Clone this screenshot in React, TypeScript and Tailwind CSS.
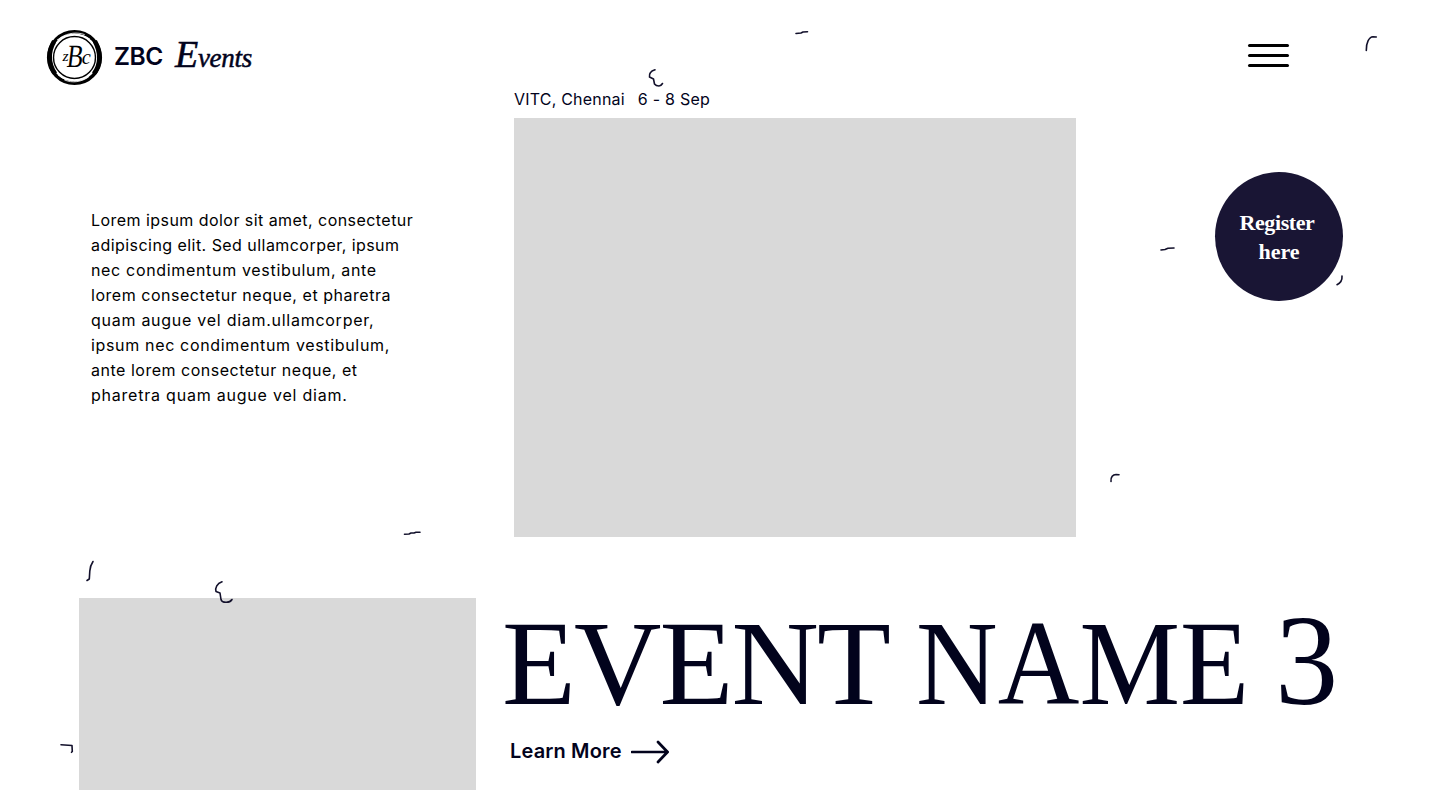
const introLines = [
  { text: 'Lorem ipsum dolor sit amet, consectetur', tracking: 'tracking-[0.45px]' },
  { text: 'adipiscing elit. Sed ullamcorper, ipsum', tracking: 'tracking-[0.45px]' },
  { text: 'nec condimentum vestibulum, ante', tracking: 'tracking-[0.67px]' },
  { text: 'lorem consectetur neque, et pharetra', tracking: 'tracking-[0.53px]' },
  { text: 'quam augue vel diam.ullamcorper,', tracking: 'tracking-[0.73px]' },
  { text: 'ipsum nec condimentum vestibulum,', tracking: 'tracking-[0.66px]' },
  { text: 'ante lorem consectetur neque, et', tracking: 'tracking-[0.51px]' },
  { text: 'pharetra quam augue vel diam.', tracking: 'tracking-[0.78px]' },
];

function Logo() {
  return (
    <svg className="size-[57px] shrink-0" viewBox="0 0 56 56" fill="none" stroke="#000">
      <circle cx="28" cy="28" r="25.4" strokeWidth="3.400" />
      <circle cx="28" cy="28" r="20.6" strokeWidth="1.4" />
      <path d="M8 12C2 22 2 34 9 44M48 12C54 23 54 35 47 44" strokeWidth="4.500" />
      <path d="M14 8.500C22 3.500 31 3 38 5.500M18 50C26 53.500 35 52 42 47" stroke="#fff" strokeWidth="0.8" />
      <path d="M11 11C19 4.500 34 3.500 43 10M12 45C20 52 34 52.500 44 44" stroke="#fff" strokeWidth="1" />
      <g fill="#000" stroke="none" fontFamily="'Liberation Serif', serif">
        <text x="16.300" y="31.500" fontSize="15" fontStyle="italic" textLength="6" lengthAdjust="spacingAndGlyphs">z</text>
        <text x="20" y="37" fontSize="32" textLength="16" lengthAdjust="spacingAndGlyphs" transform="translate(4.200 0) skewX(-7)">B</text>
        <text x="35" y="34" fontSize="20" fontStyle="italic">c</text>
      </g>
    </svg>
  );
}

function Confetti() {
  return (
    <svg
      className="pointer-events-none absolute inset-0 h-full w-full"
      viewBox="0 0 1440 790"
      fill="none"
      stroke="#12102b"
      strokeWidth="1.6"
      strokeLinecap="round"
      strokeLinejoin="round"
      aria-hidden="true"
    >
      <path d="M796 33.500L801 33L803 32L807.500 31.800" />
      <path d="M404.500 534.300L409 534L411 533L414 533L416 532.200L420 532.200" />
      <path d="M1161 250L1165 249.500L1168 248.300L1174 248" />
      <path d="M655 69.700C651 71 649 74 649.500 77L653.500 79L654.500 84Q656 86 659 86Q661 86 662.500 83.500" />
      <path d="M222 581.700C217 583.500 215 588 216 591.500L220 593L221 599.500C222 603 229.500 603.500 232 599.500" />
      <path d="M1366.300 50.500C1366 43 1369 37 1373 36.800L1376.300 37" />
      <path d="M1342 276Q1342.500 282 1337 284.700" />
      <path d="M1111 481.500C1110.500 477 1113 474.500 1116 474.500L1119 474.700" />
      <path d="M93 561.500C91 564.500 90 567 89.800 571L89.300 579L87 580.500" />
      <path d="M61 744.700L72 745.500L72.300 751.500L71.500 752.300" />
    </svg>
  );
}

export default function App() {
  return (
    <div className="relative flex h-[790px] w-[1440px] flex-col overflow-hidden bg-white font-[Inter,sans-serif] text-[#02031c]">
      <header className="flex h-[87px] shrink-0 items-start justify-between pl-[46px] pr-[151px] pt-[29px]">
        <div className="flex">
          <Logo />
          <span className="ml-[11px] mt-[9px] text-[24.500px] leading-9 font-semibold tracking-[-0.4px]">ZBC</span>
          <span className="ml-[12px] mt-[5px] inline-block whitespace-nowrap font-['Liberation_Serif',serif] text-[27px] leading-10 italic tracking-[-0.3px] [-webkit-text-stroke:0.5px_#02031c] first-letter:text-[38px]">
            Events
          </span>
        </div>
        <button className="mt-[15px] flex w-[41px] flex-col gap-[7px]" aria-label="Menu">
          <span className="h-[3px] w-full rounded-full bg-black" />
          <span className="h-[3px] w-full rounded-full bg-black" />
          <span className="h-[3px] w-full rounded-full bg-black" />
        </button>
      </header>

      <section className="flex h-[511px] shrink-0">
        <p className="ml-[91px] w-[423px] pt-[121px] text-base leading-[25px] text-black">
          {introLines.map((line) => (
            <span key={line.text} className={`block whitespace-nowrap ${line.tracking}`}>
              {line.text}
            </span>
          ))}
        </p>
        <div className="w-[562px]">
          <div className="flex h-[31px] gap-[13px] text-base leading-6">
            <span className="tracking-[0.2px]">VITC, Chennai</span>
            <span className="tracking-[0.25px]">6 - 8 Sep</span>
          </div>
          <div className="h-[419px] bg-[#d9d9d9]" />
        </div>
        <a className="ml-[139px] mt-[85px] flex h-[129px] w-[128px] flex-col items-center justify-center rounded-[50%] bg-[#191534] font-['Liberation_Serif',serif] text-[22px] leading-[29px] font-bold text-white">
          <span className="mr-1 tracking-[-0.4px]">Register</span>
          <span>here</span>
        </a>
      </section>

      <section className="flex h-[192px] shrink-0">
        <div className="ml-[79px] w-[397px] bg-[#d9d9d9]" />
        <div className="ml-[26px]">
          <h1 className="flex h-[126px] items-baseline font-['Liberation_Serif',serif] text-[121px] leading-[126px] text-[#02031c]">
            <span className="w-[414px] tracking-[-1.900px]">EVENT</span>
            <span className="w-[359px] origin-left scale-x-[0.935] whitespace-nowrap">NAME</span>
            <span className="origin-left scale-x-[0.98] text-[129px] leading-[126px]">3</span>
          </h1>
          <a className="ml-[8px] mt-[13px] flex items-center text-xl leading-7 font-semibold">
            <span className="w-[121px] whitespace-nowrap tracking-[0.15px]">Learn More</span>
            <svg className="mt-px h-6 w-[38px]" viewBox="0 0 38 24" fill="none" stroke="#02031c" strokeWidth="2.700" strokeLinecap="round">
              <path d="M1 12H36M27 2L36.500 12L27 22" />
            </svg>
          </a>
        </div>
      </section>
      <Confetti />
    </div>
  );
}
